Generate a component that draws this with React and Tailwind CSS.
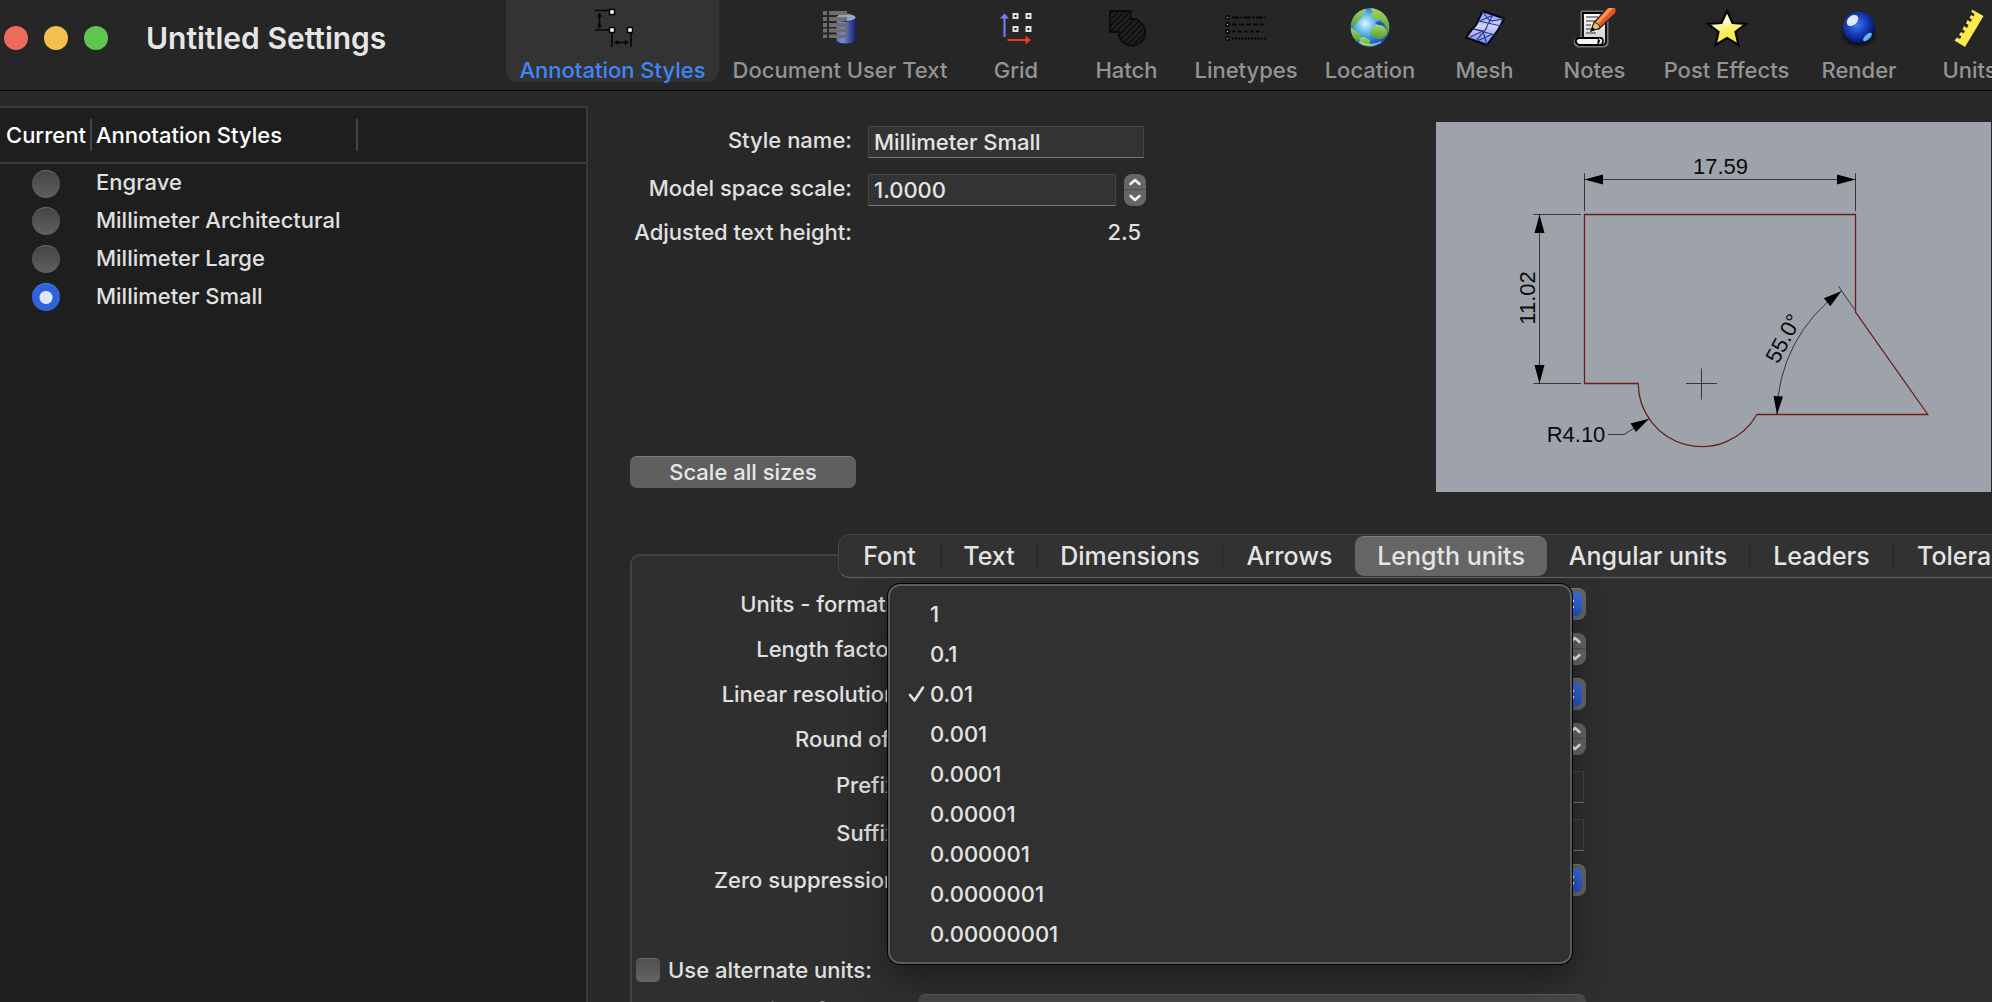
import React from "react";

const AnnotationIcon = () => (
  <svg width="40" height="40" viewBox="0 0 40 40" fill="none" stroke="#050505" strokeWidth="1.6">
    <path d="M2 2.5H17M2 22H17M19 24V39M38 24V39M6.5 7V19M23 34.5H34" />
    <path d="M6.5 5l-2 3.5h4zM6.5 20.500l-2-3.500h4zM21.500 34.500l3.500-2v4zM35.500 34.500l-3.500-2v4z" fill="#050505" strokeWidth="0.6" />
    <g fill="#fff" strokeWidth="1.5">
      <rect x="16.500" y="1.500" width="5" height="5" />
      <rect x="16.500" y="19.500" width="5" height="5" />
      <rect x="34.500" y="19.500" width="5" height="5" />
    </g>
  </svg>
);

const DocumentTextIcon = () => (
  <svg width="40" height="40" viewBox="0 0 40 40">
    <defs>
      <linearGradient id="cyl" x1="0" x2="1" y1="0" y2="0">
        <stop offset="0" stopColor="#5f6cb8" />
        <stop offset="0.35" stopColor="#7f8cd0" />
        <stop offset="0.7" stopColor="#3c4a9c" />
        <stop offset="1" stopColor="#18226a" />
      </linearGradient>
    </defs>
    <path d="M16 9.500V32c0 2.500 4.500 4 10 4s10-1.500 10-4V9.500z" fill="url(#cyl)" stroke="#1a1d33" strokeWidth="1" />
    <ellipse cx="26" cy="9.500" rx="10" ry="4" fill="#9aa3c8" stroke="#1a1d33" strokeWidth="0.8" />
    <g fill="#6e6e6e">
      <path d="M3 3h4v4H3zM9 3h18v4H9zM3 9h4v4H3zM9 9h18v4H9zM3 15h4v4H3zM9 15h18v4H9zM3 20.500h4v4H3zM9 20.500h18v4H9zM3 26.500h4v3.500H3zM9 26.500h18v3.500H9z" />
    </g>
  </svg>
);

const GridIcon = () => (
  <svg width="40" height="40" viewBox="0 0 40 40" fill="none">
    <path d="M8.500 9V29" stroke="#6f83ff" strokeWidth="2" />
    <path d="M8.500 5.500L4 10.500h9z" fill="#6f83ff" />
    <path d="M11.500 32H31" stroke="#f03a1e" strokeWidth="2" />
    <path d="M35 32l-5.500-4.500v9z" fill="#f03a1e" />
    <g fill="#151515" stroke="#e2e2e2" strokeWidth="2">
      <rect x="17.500" y="6" width="4" height="4" />
      <rect x="30.500" y="6" width="4" height="4" />
      <rect x="17.500" y="19" width="4" height="4" />
      <rect x="30.500" y="19" width="4" height="4" />
    </g>
  </svg>
);

const HatchIcon = () => (
  <svg width="40" height="40" viewBox="0 0 40 40" fill="none" stroke="#0b0b0b" strokeWidth="1.6">
    <defs>
      <clipPath id="hatchShape">
        <path d="M3 3h20v8a13 13 0 1 1-12 13H3z" />
      </clipPath>
    </defs>
    <path d="M3 3H23.500V11A13.300 13.300 0 1 1 11.500 24H3Z" fill="#202020" strokeWidth="1.800" />
    <g clipPath="url(#hatchShape)" strokeWidth="1.300">
      <path d="M0 9L9 0M0 15L15 0M0 21L21 0M0 27L27 0M4 29L33 0M8 31L36 3M10 35L42 3M13 38L42 9M18 39L42 15M24 39L42 21" />
    </g>
  </svg>
);

const LinetypesIcon = () => (
  <svg width="46" height="40" viewBox="0 0 46 40" fill="none" stroke="#070707" strokeWidth="1.800">
    <g fill="#cfcfcf">
      <circle cx="4.500" cy="9.500" r="1.600" />
      <circle cx="4.500" cy="16.500" r="1.600" />
      <circle cx="4.500" cy="23.500" r="1.600" />
      <circle cx="4.500" cy="30.500" r="1.600" />
    </g>
    <path d="M9 9.500H44" strokeDasharray="7 1.500 2 1.500" />
    <path d="M9 16.500H41" strokeDasharray="5 2" />
    <path d="M9 23.500H40" strokeDasharray="3.500 2.500" />
    <path d="M9 30.500H44" strokeDasharray="2 1.200" />
  </svg>
);

const LocationIcon = () => (
  <svg width="40" height="40" viewBox="0 0 40 40">
    <defs>
      <radialGradient id="sea" cx="0.38" cy="0.4" r="0.62">
        <stop offset="0" stopColor="#e4f6ff" />
        <stop offset="0.3" stopColor="#7cc6f0" />
        <stop offset="0.65" stopColor="#2e8ad8" />
        <stop offset="1" stopColor="#1a4fae" />
      </radialGradient>
      <clipPath id="globe">
        <circle cx="20" cy="19.500" r="19.300" />
      </clipPath>
      <linearGradient id="land" x1="0" y1="0" x2="0" y2="1">
        <stop offset="0" stopColor="#a8d860" />
        <stop offset="1" stopColor="#4f9a34" />
      </linearGradient>
    </defs>
    <circle cx="20" cy="19.500" r="19.300" fill="url(#sea)" />
    <g clipPath="url(#globe)" fill="url(#land)">
      <path d="M0 14L3 6l8-6 5 1-1 4-4 1 1 4-4 2-3 5-3 3z" />
      <path d="M0 20l4 2 5 3 2 4-3 4-3 1-5-6z" />
      <path d="M20 0l8 0 8 5 5 8 1 10-4 4-1-6-3-6-4-3-3 0-3-3-3 1-1-3 3-3z" />
      <path d="M22 20l4-3 6 0 3 3 2 2 0 5-5 4-4 0-5-2-3-4z" />
      <path d="M9 30l5-1 6 3 0 4 6 1-4 3h-10z" />
    </g>
    <path d="M25 15l4-2 5 3 0 2-5-1z" fill="#1c56b4" />
    <path d="M9 34Q20 40 31 34" fill="none" stroke="#c8eeff" strokeWidth="1.500" opacity="0.600" />
  </svg>
);

const MeshIcon = () => (
  <svg width="40" height="40" viewBox="0 0 40 40">
    <defs>
      <linearGradient id="mesh" x1="0" y1="0" x2="0" y2="1">
        <stop offset="0" stopColor="#7f92ff" />
        <stop offset="0.45" stopColor="#cfd6ff" />
        <stop offset="1" stopColor="#6f83f8" />
      </linearGradient>
    </defs>
    <path d="M17.500 3L39 10.500Q36 17 33 22Q27 30 22 37L1 29.500Q6 22 11 17Q15 9 17.500 3Z" fill="url(#mesh)" stroke="#05050c" strokeWidth="2" strokeLinejoin="round" />
    <path d="M28 7Q23 15 21 21Q15 28 11 33M13.500 13L36 18M8 21L30 27M17 3L25 13 39 11M13 14L28 7M9 21L18 23 22 37M3 30L16 24M12 33L28 26" fill="none" stroke="#2f3a86" strokeWidth="1.200" />
  </svg>
);

const NotesIcon = () => (
  <svg width="42" height="42" viewBox="0 0 42 42">
    <defs>
      <linearGradient id="paper" x1="0" y1="0" x2="0" y2="1">
        <stop offset="0" stopColor="#fff" />
        <stop offset="1" stopColor="#c8c8c8" />
      </linearGradient>
    </defs>
    <path d="M8 4H33V36Q32 38 28 38H4Q0 36 2 32L8 29Z" fill="#77777a" stroke="#77777a" strokeWidth="3" strokeLinejoin="round" />
    <path d="M8 5H32V33Q32 37 28 37H9V5Z" fill="url(#paper)" stroke="#000" strokeWidth="1.800" />
    <path d="M5 30H26Q23 33 26 37H5Q1 35 2 32Q3 30 5 30Z" fill="#f4f4f4" stroke="#000" strokeWidth="1.800" />
    <path d="M24 30Q29 29 29 33T25 37Q23 33 26 33" fill="#e0e0e0" stroke="#000" strokeWidth="1.600" />
    <path d="M12 9H24M12 13H21M12 17H17M12 21H26M12 25H22" stroke="#6e6e6e" strokeWidth="1.500" />
    <path d="M17 23L20 14.500L34 -1H42V5L26 20Z" fill="#e8532b" stroke="#222" strokeWidth="1.200" />
    <path d="M21 15L36 -1H40L23.500 17Z" fill="#ff9a4d" />
    <path d="M17 23L20 14.500Q25 15 26 20Z" fill="#e9c36c" stroke="#222" strokeWidth="1" />
    <path d="M17 23l1.500-4 2.500 2.200z" fill="#000" />
  </svg>
);

const StarIcon = () => (
  <svg width="42" height="40" viewBox="0 0 42 40">
    <defs>
      <linearGradient id="star" x1="0.300" y1="0" x2="0.600" y2="1">
        <stop offset="0.150" stopColor="#ffffff" />
        <stop offset="0.600" stopColor="#fbf05e" />
        <stop offset="1" stopColor="#f2e23a" />
      </linearGradient>
    </defs>
    <path d="M21 3L26.500 15L39.500 16L29.500 24L32.500 37L21 30L9.500 37L12.500 24L2.500 16L15.500 15Z" fill="url(#star)" stroke="#050505" strokeWidth="2.200" />
  </svg>
);

const RenderIcon = () => (
  <svg width="40" height="40" viewBox="0 0 40 40">
    <defs>
      <radialGradient id="ball" cx="0.420" cy="0.400" r="0.620">
        <stop offset="0" stopColor="#3f7cf0" />
        <stop offset="0.500" stopColor="#1740c0" />
        <stop offset="1" stopColor="#04105c" />
      </radialGradient>
      <radialGradient id="ballShade">
        <stop offset="0.600" stopColor="#000" stopOpacity="0.700" />
        <stop offset="1" stopColor="#000" stopOpacity="0" />
      </radialGradient>
    </defs>
    <ellipse cx="20" cy="27" rx="19" ry="13" fill="url(#ballShade)" />
    <circle cx="20" cy="19.500" r="15.800" fill="url(#ball)" />
    <ellipse cx="13.500" cy="12.500" rx="6.500" ry="4.500" fill="#eaf2ff" opacity="0.950" transform="rotate(-40 13.500 12.500)" />
    <ellipse cx="28.500" cy="29" rx="5.500" ry="2.500" fill="#6fc4ff" opacity="0.900" transform="rotate(-42 28.500 29)" />
  </svg>
);

const UnitsIcon = () => (
  <svg width="40" height="40" viewBox="0 0 40 40">
    <path d="M22 1.500L33.500 8L15 39L4.500 32.500L7 29.500L10 31L11.500 28.500L9 27L11 24L13.500 25.500L15 23L12.500 21.500L14 18L17 20L18.500 17L16 15.500L17.500 12L20.500 14L22 11.500L19.500 10L21 7L23.500 8.500L24.500 6L21.500 4Z" fill="#fbe94e" />
  </svg>
);

const toolbar = [
  { label: "Annotation Styles", icon: AnnotationIcon, width: "w-[213px]", active: true },
  { label: "Document User Text", icon: DocumentTextIcon, width: "w-60" },
  { label: "Grid", icon: GridIcon, width: "w-[110px]" },
  { label: "Hatch", icon: HatchIcon, width: "w-[109px]" },
  { label: "Linetypes", icon: LinetypesIcon, width: "w-32" },
  { label: "Location", icon: LocationIcon, width: "w-[118px]" },
  { label: "Mesh", icon: MeshIcon, width: "w-[109px]" },
  { label: "Notes", icon: NotesIcon, width: "w-[109px]" },
  { label: "Post Effects", icon: StarIcon, width: "w-[153px]" },
  { label: "Render", icon: RenderIcon, width: "w-[110px]" },
  { label: "Units", icon: UnitsIcon, width: "w-[109px]" },
];

const styles = ["Engrave", "Millimeter Architectural", "Millimeter Large", "Millimeter Small"];

const tabs = [
  { label: "Font", width: "w-[103px]", divider: true },
  { label: "Text", width: "w-24", divider: true },
  { label: "Dimensions", width: "w-[186px]", divider: true },
  { label: "Arrows", width: "w-[131px]" },
  { label: "Length units", width: "w-48", active: true },
  { label: "Angular units", width: "w-[204px]", divider: true },
  { label: "Leaders", width: "w-[143px]", divider: true },
  { label: "Tolerances", width: "w-[178px]" },
];

const resolutions = ["1", "0.1", "0.01", "0.001", "0.0001", "0.00001", "0.000001", "0.0000001", "0.00000001"];

const inputClass =
  "h-8 min-w-0 rounded-none border border-[#454545] border-b-[#777] bg-[#333] px-[5px] text-[22px] leading-7 text-[#e4e4e4] outline-none";

function Stepper({ label }) {
  return (
    <div className="flex h-8 w-[22px] shrink-0 flex-col overflow-hidden rounded-[8px] bg-[#666] text-[#f0f0f0]">
      <button type="button" aria-label={`Increase ${label}`} className="flex h-4 items-center justify-center border-b border-[#4c4c4c]">
        <svg width="14" height="8" viewBox="0 0 14 8" fill="none" stroke="currentColor" strokeWidth="2.600" strokeLinecap="round" strokeLinejoin="round">
          <path d="M2.500 6L7 2L11.500 6" />
        </svg>
      </button>
      <button type="button" aria-label={`Decrease ${label}`} className="flex h-4 items-center justify-center">
        <svg width="14" height="8" viewBox="0 0 14 8" fill="none" stroke="currentColor" strokeWidth="2.600" strokeLinecap="round" strokeLinejoin="round">
          <path d="M2.500 2L7 6L11.500 2" />
        </svg>
      </button>
    </div>
  );
}

function PopUp({ id, value, muted }) {
  return (
    <div className="relative h-8 w-full">
      <select
        id={id}
        defaultValue={value}
        className={
          "h-8 w-full appearance-none rounded-[8px] border-t px-4 text-[22px] leading-7 outline-none " +
          (muted ? "border-[#5a5a5a] bg-[#474747] text-[#8a8a8a]" : "border-[#7c7c7c] bg-[#666] text-[#e4e4e4]")
        }
      >
        <option>{value}</option>
      </select>
      {!muted && (
        <span className="pointer-events-none absolute top-1 right-1 flex h-6 w-[26px] items-center justify-center rounded-[6px] bg-linear-to-b from-[#3a70e0] to-[#2453c4]">
          <svg width="12" height="18" viewBox="0 0 12 18" fill="none" stroke="#fff" strokeWidth="2.400" strokeLinecap="round" strokeLinejoin="round">
            <path d="M2 6L6 2L10 6M2 12L6 16L10 12" />
          </svg>
        </span>
      )}
    </div>
  );
}

function Field({ label, id, rowClass, children }) {
  return (
    <div className={"flex items-center gap-[14px] " + rowClass}>
      <label htmlFor={id} className="w-[272px] shrink-0 text-right text-[22px] leading-7 whitespace-nowrap">
        {label}
      </label>
      <div className="flex w-[668px] items-center">{children}</div>
    </div>
  );
}

function Preview() {
  return (
    <svg width="555" height="370" viewBox="0 0 555 370" className="shrink-0 bg-[#9ea3ab]" role="img" aria-label="Dimension style preview">
      <path
        d="M148.500 92.500H419.500V190L491.800 292.500H320.900A63.500 63.500 0 0 1 202.200 262V261.500H148.500Z"
        fill="none"
        stroke="#6b1c1c"
        strokeWidth="1.300"
      />
      <g fill="none" stroke="#33363b" strokeWidth="1">
        <path d="M148.500 51V89M419.500 51V89M148.500 57.500H419.500" />
        <path d="M97.500 92.500H145M97.500 261.500H145M103.500 92.500V261.500" />
        <path d="M341 292.500A150.800 150.800 0 0 1 405.300 169.200M402.500 164.300L418.500 187.500" />
        <path d="M172 312.500H188L213 296.700" />
        <path d="M250 261.500H281M265.500 246.500V277.500" />
      </g>
      <g fill="#000">
        <path d="M148.500 57.500l18.500-5v10zM419.500 57.500l-18.500-5v10z" />
        <path d="M103.500 92.500l-5 18.500h10zM103.500 261.500l-5-18.500h10z" />
        <path d="M341 292.500L337.500 274L347 274.500Z" />
        <path d="M405.300 169.200L387.800 176.300L394.300 184.300Z" />
        <path d="M213 296.700L194.500 301.500L200 310Z" />
      </g>
      <g fill="#0a0a0a" fontFamily="Liberation Sans, Arial, sans-serif" fontSize="22" fontWeight="400" textAnchor="middle">
        <text x="284.500" y="52">17.59</text>
        <text transform="translate(99 176) rotate(-90)">11.02</text>
        <text transform="translate(354 220) rotate(-62)">55.0°</text>
        <text x="140" y="320">R4.10</text>
      </g>
    </svg>
  );
}

export default function App() {
  return (
    <div className="flex h-screen flex-col overflow-hidden bg-[#282828] font-['Inter',sans-serif] font-[450] text-[#e0e0e0]">
      <header className="flex h-[91px] shrink-0 border-b border-black bg-[#262626]">
        <div className="flex w-[506px] shrink-0 items-start pt-[18px] pl-1">
          <div className="flex h-10 items-center gap-4">
            <button type="button" aria-label="Close" className="size-6 rounded-full bg-[#ed6a5e]" />
            <button type="button" aria-label="Minimize" className="size-6 rounded-full bg-[#f5bf4f]" />
            <button type="button" aria-label="Zoom" className="size-6 rounded-full bg-[#61c554]" />
          </div>
          <h1 className="pl-[38px] text-[30px] leading-10 font-semibold whitespace-nowrap text-[#e6e6e6]">Untitled Settings</h1>
        </div>
        <nav className="flex gap-px" aria-label="Settings sections">
          {toolbar.map(({ label, icon: Icon, width, active }) => (
            <button
              key={label}
              type="button"
              className={
                "flex h-[82px] shrink-0 flex-col items-center pt-2 text-[22px] leading-6 whitespace-nowrap " +
                width +
                (active ? " rounded-b-[12px] bg-[#333] text-[#3f87f8]" : " text-[#949494]")
              }
            >
              <span className="flex h-[50px] shrink-0 items-start justify-center">
                <Icon />
              </span>
              {label}
            </button>
          ))}
        </nav>
      </header>

      <div className="flex min-h-0 flex-1">
        <aside className="mt-[15px] w-[588px] shrink-0 border-t-2 border-r-2 border-[#3a3a3a] bg-[#1e1e1e]">
          <table className="w-full table-fixed border-collapse text-left text-[22px] leading-7">
            <thead>
              <tr className="h-[55px] border-b-2 border-[#3a3a3a] text-white">
                <th scope="col" className="w-[92px] p-0 font-medium">
                  <div className="flex h-8 items-center border-r-2 border-[#444] pl-1.5">Current</div>
                </th>
                <th scope="col" className="w-[266px] p-0 font-medium">
                  <div className="flex h-8 items-center border-r-2 border-[#444] pl-1">Annotation Styles</div>
                </th>
                <th />
              </tr>
            </thead>
            <tbody>
              {styles.map((name) => {
                const id = name.toLowerCase().replace(/ /g, "-");
                return (
                  <tr key={name} className="h-[38px]">
                    <td className="p-0 pt-0.5">
                      <input
                        type="radio"
                        id={id}
                        name="current-style"
                        defaultChecked={name === "Millimeter Small"}
                        className="ml-8 block size-7 appearance-none rounded-full border-t border-[#6a6a6a] bg-linear-to-b from-[#454545] to-[#606060] checked:border-[#4a80ec] checked:bg-[radial-gradient(circle,#dfe8fb_0_6px,#2f63da_7px)]"
                      />
                    </td>
                    <td colSpan={2} className="p-0 pb-px pl-1">
                      <label htmlFor={id} className="block">{name}</label>
                    </td>
                  </tr>
                );
              })}
            </tbody>
          </table>
        </aside>

        <main className="min-w-0 flex-1 pt-[25px] pl-[42px]">
          <section className="flex justify-between pr-px">
            <div className="flex h-[372px] flex-col justify-between">
              <div className="text-[22px] leading-7">
                <div className="flex h-12 items-center gap-4">
                  <label htmlFor="style-name" className="w-[222px] text-right whitespace-nowrap">Style name:</label>
                  <input id="style-name" defaultValue="Millimeter Small" className={inputClass + " mt-1 w-[276px]"} />
                </div>
                <div className="flex h-12 items-center gap-4">
                  <label htmlFor="model-scale" className="w-[222px] text-right whitespace-nowrap">Model space scale:</label>
                  <div className="mt-1 flex items-center gap-2">
                    <input id="model-scale" defaultValue="1.0000" className={inputClass + " w-[248px]"} />
                    <Stepper label="model space scale" />
                  </div>
                </div>
                <div className="flex h-10 items-center gap-4">
                  <span className="w-[222px] text-right whitespace-nowrap">Adjusted text height:</span>
                  <output className="w-[273px] text-right">2.5</output>
                </div>
              </div>
              <button
                type="button"
                className="h-8 w-[226px] rounded-[7px] border-t border-[#7a7a7a] bg-[#5f5f5f] pb-0.5 text-[22px] leading-7 text-[#e6e6e6]"
              >
                Scale all sizes
              </button>
            </div>
            <div className="pt-1.5">
              <Preview />
            </div>
          </section>

          <div role="tablist" className="relative z-10 mt-[42px] -mb-6 ml-52 flex h-11 w-max items-center rounded-[12px] border border-[#454545] border-b-[#636363] bg-[#323232]">
            {tabs.map(({ label, width, divider, active }) => (
              <button
                key={label}
                type="button"
                role="tab"
                aria-selected={Boolean(active)}
                className={
                  "flex shrink-0 items-center justify-center text-[25px] leading-8 whitespace-nowrap text-[#e4e4e4] " +
                  width +
                  (active ? " h-10 rounded-[9px] border-t border-[#7e7e7e] bg-[#656565] pb-px" : " h-6") +
                  (divider ? " border-r-2 border-[#2b2b2b]" : "")
                }
              >
                {label}
              </button>
            ))}
          </div>

          <section className="relative -mr-8 h-[560px] rounded-[10px] border-2 border-[#424242] bg-[#2f2f2f] pt-[25px]">
            <Field label="Units - formats:" id="units-format" rowClass="h-[45px]">
              <PopUp id="units-format" value="Millimeters - decimal" />
            </Field>
            <Field label="Length factor:" id="length-factor" rowClass="h-[45px]">
              <input id="length-factor" defaultValue="1.0000" className={inputClass + " mr-2 flex-1"} />
              <Stepper label="length factor" />
            </Field>
            <Field label="Linear resolution:" id="linear-resolution" rowClass="h-[45px]">
              <PopUp id="linear-resolution" value="0.01" />
            </Field>
            <Field label="Round off:" id="round-off" rowClass="h-[45px]">
              <input id="round-off" defaultValue="0.0000" className={inputClass + " mr-2 flex-1"} />
              <Stepper label="round off" />
            </Field>
            <Field label="Prefix:" id="prefix" rowClass="h-12">
              <input id="prefix" className={inputClass + " mt-1 mr-0.5 flex-1"} />
            </Field>
            <Field label="Suffix:" id="suffix" rowClass="h-12">
              <input id="suffix" className={inputClass + " mt-1 mr-0.5 flex-1"} />
            </Field>
            <Field label="Zero suppression:" id="zero-suppression" rowClass="h-[45px]">
              <PopUp id="zero-suppression" value="None" />
            </Field>

            <div className="mt-[52px] flex h-8 items-center gap-2 pl-1">
              <input
                type="checkbox"
                id="alternate-units"
                className="size-6 appearance-none rounded-[5px] border-t border-[#6c6c6c] bg-linear-to-b from-[#505050] to-[#646464]"
              />
              <label htmlFor="alternate-units" className="text-[22px] leading-7">Use alternate units:</label>
            </div>
            <Field label="Units - formats:" id="alternate-format" rowClass="mt-2 h-8 text-[#8a8a8a]">
              <PopUp id="alternate-format" value="Inches - decimal" muted />
            </Field>

            <ul
              role="listbox"
              aria-label="Linear resolution"
              className="absolute top-[28px] left-[256px] w-[684px] rounded-[12px] border-2 border-[#5c5c5c] bg-[#313131] py-2 shadow-[0_0_0_1px_#000,0_14px_36px_rgba(0,0,0,0.4)]"
            >
              {resolutions.map((value) => (
                <li key={value} role="option" aria-selected={value === "0.01"} className="flex h-10 items-center pl-[18px] text-[22px] leading-7 text-[#e4e4e4]">
                  <span className="w-[22px]">
                    {value === "0.01" && (
                      <svg width="18" height="18" viewBox="0 0 18 18" fill="none" stroke="currentColor" strokeWidth="2.600" strokeLinecap="round" strokeLinejoin="round">
                        <path d="M2 10L6.500 15.500L15 2.500" />
                      </svg>
                    )}
                  </span>
                  {value}
                </li>
              ))}
            </ul>
          </section>
        </main>
      </div>
    </div>
  );
}
